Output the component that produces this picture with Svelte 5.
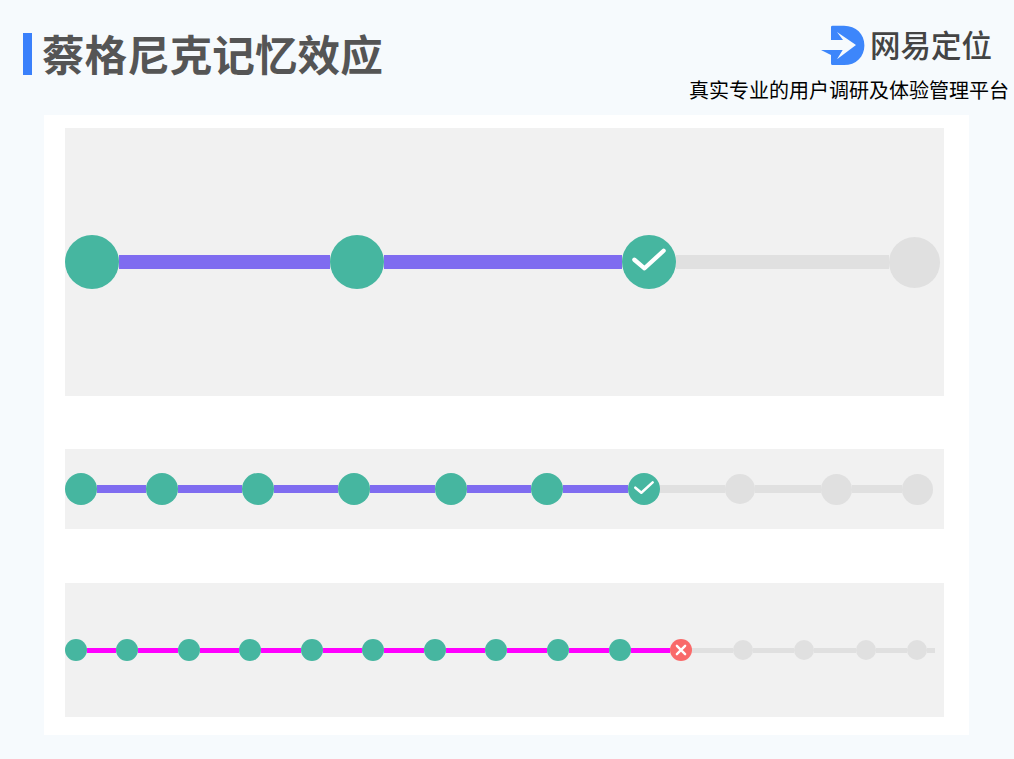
<script>
  const done = 'done', current = 'current', failed = 'failed', todo = 'todo';

  function build(list, end) {
    const steps = [];
    let cursor = 65;
    for (const [left, size, state] of list) {
      steps.push({ gap: left - cursor, size, state, active: state !== todo });
      cursor = left + size;
    }
    return { steps, tail: end ? end - cursor : 0 };
  }

  const rows = [
    {
      cls: 'large',
      ...build([
        [65, 54, done],
        [330, 54, done],
        [622, 54, current],
        [889, 51, todo]
      ])
    },
    {
      cls: 'medium',
      ...build([
        [65, 32, done],
        [146, 32, done],
        [242, 32, done],
        [338, 32, done],
        [435, 32, done],
        [531, 32, done],
        [628, 32, current],
        [725, 30, todo],
        [821, 31, todo],
        [902, 31, todo]
      ])
    },
    {
      cls: 'small',
      ...build(
        [
          [65, 22, done],
          [116, 22, done],
          [178, 22, done],
          [239, 22, done],
          [301, 22, done],
          [362, 22, done],
          [424, 22, done],
          [485, 22, done],
          [547, 22, done],
          [609, 22, done],
          [670, 22, failed],
          [733, 20, todo],
          [794, 20, todo],
          [856, 20, todo],
          [907, 20, todo]
        ],
        935
      )
    }
  ];
</script>

<div class="page">
  <header class="header">
    <div class="heading">
      <span class="bar"></span>
      <h1>蔡格尼克记忆效应</h1>
    </div>
    <div class="brand">
      <div class="logo">
        <svg width="44" height="41" viewBox="0 0 44 41" aria-hidden="true">
          <path
            fill="#3d86fb"
            d="M10 2 Q10 .7 11.5 .7 H23 C35 .7 43.4 9 43.4 20.4 C43.4 31.8 35 40 23 40 H11.5 Q10 40 10 38.5 V30 L0 25 H21.7 L16 34.3 L35 20 L16 7 L22 15 H10 Z"
          />
        </svg>
        <span class="logo-text">网易定位</span>
      </div>
      <p class="slogan">真实专业的用户调研及体验管理平台</p>
    </div>
  </header>

  <main class="card">
    {#each rows as row}
      <section class="panel {row.cls}">
        <div class="track">
          {#each row.steps as step}
            {#if step.gap > 0}
              <span class="line" class:active={step.active} style="width:{step.gap}px"></span>
            {/if}
            <span class="dot {step.state}" style="width:{step.size}px;height:{step.size}px">
              {#if step.state === 'current'}
                <svg viewBox="0 0 24 24" aria-hidden="true">
                  <path d="M5.5 11 L10 14.8 L18.5 7" fill="none" stroke="#fff" stroke-width="1.9" stroke-linecap="round" stroke-linejoin="round" />
                </svg>
              {:else if step.state === 'failed'}
                <svg viewBox="0 0 24 24" aria-hidden="true">
                  <path d="M7.5 7.5 L16.5 16.5 M16.5 7.5 L7.5 16.5" fill="none" stroke="#fff" stroke-width="2.6" stroke-linecap="round" />
                </svg>
              {/if}
            </span>
          {/each}
          {#if row.tail > 0}
            <span class="line" style="width:{row.tail}px"></span>
          {/if}
        </div>
      </section>
    {/each}
  </main>
</div>

<style>
  :global(body) {
    margin: 0;
    background: #f6fafd;
  }

  .page {
    width: 1014px;
    height: 759px;
    box-sizing: border-box;
    font-family: "Noto Sans CJK SC", "Noto Sans", sans-serif;
    overflow: hidden;
  }

  .header {
    height: 115px;
    box-sizing: border-box;
    display: flex;
    justify-content: space-between;
    align-items: flex-start;
    padding: 25px 5px 0 23px;
  }

  .heading {
    display: flex;
    align-items: center;
    gap: 10px;
    margin-top: 8px;
    height: 42px;
  }

  .bar {
    width: 9px;
    height: 42px;
    background: #3a80fb;
  }

  h1 {
    margin: -3px 0 0;
    font-size: 42.6px;
    line-height: 42px;
    font-weight: 700;
    color: #555;
    white-space: nowrap;
  }

  .brand {
    display: flex;
    flex-direction: column;
    align-items: flex-end;
  }

  .logo {
    display: flex;
    align-items: center;
    gap: 5px;
    height: 41px;
    margin-right: 17px;
  }

  .logo-text {
    font-size: 30.5px;
    line-height: 41px;
    margin-top: -2px;
    font-weight: 500;
    color: #444;
    white-space: nowrap;
  }

  .slogan {
    margin: 12px 0 0;
    font-size: 20px;
    line-height: 24px;
    color: #000;
    white-space: nowrap;
  }

  .card {
    width: 925px;
    height: 620px;
    box-sizing: border-box;
    margin-left: 44px;
    padding: 13px 25px 18px 21px;
    background: #fff;
    display: flex;
    flex-direction: column;
  }

  .panel {
    width: 879px;
    background: #f1f1f1;
    display: flex;
    align-items: center;
  }

  .panel.large { height: 268px; }
  .panel.medium { height: 80px; margin-top: 53px; }
  .panel.small { height: 134px; margin-top: 54px; }

  .track {
    display: flex;
    align-items: center;
  }

  .line {
    display: block;
    flex: none;
    background: #e0e0e0;
  }

  .large .line { height: 14px; }
  .medium .line { height: 8px; }
  .small .line { height: 5px; }

  .panel.large .line.active { background: #7f6cf0; }
  .panel.medium .line.active { background: #7f6cf0; }
  .panel.small .line.active { background: #ff00ff; }

  .dot {
    flex: none;
    border-radius: 50%;
    display: flex;
    align-items: center;
    justify-content: center;
  }

  .dot.done,
  .dot.current { background: #46b6a0; }
  .dot.failed { background: #f96a6a; }
  .dot.todo { background: #e0e0e0; }

  .dot svg {
    width: 100%;
    height: 100%;
    display: block;
  }
</style>
